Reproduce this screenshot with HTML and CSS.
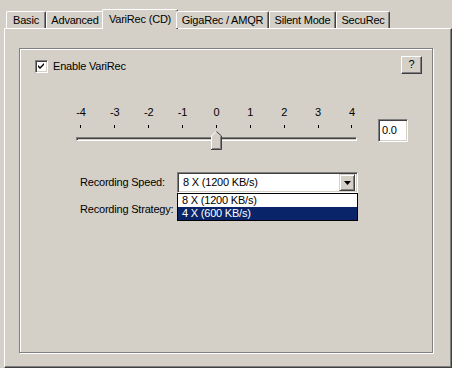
FILE: index.html
```html
<!DOCTYPE html>
<html>
<head>
<meta charset="utf-8">
<link rel="stylesheet" href="styles.css">
</head>
<body>
<div class="dialog">
  <div class="tabs">
    <div class="tab w-basic">Basic</div>
    <div class="tab w-adv">Advanced</div>
    <div class="tab active w-vari">VariRec (CD)</div>
    <div class="tab w-giga">GigaRec / AMQR</div>
    <div class="tab w-silent">Silent Mode</div>
    <div class="tab w-secu">SecuRec</div>
  </div>
  <div class="panel">
    <div class="group">
      <div class="header">
        <label class="check">
          <span class="box">
            <svg width="7" height="7" viewBox="0 0 7 7"><polygon points="0,2 2,4 6,0 6,2 2,6 0,4" fill="#000"/></svg>
          </span>
          <span>Enable VariRec</span>
        </label>
        <div class="btn help">?</div>
      </div>
      <div class="slider-row">
        <div class="slider">
          <div class="labels">
            <span>-4</span><span>-3</span><span>-2</span><span>-1</span><span>0</span><span>1</span><span>2</span><span>3</span><span>4</span>
          </div>
          <div class="ticks">
            <i></i><i></i><i></i><i></i><i></i><i></i><i></i><i></i><i></i>
          </div>
          <div class="track">
            <svg class="thumb" width="11" height="19" viewBox="0 0 11 19">
              <polygon points="0,5 5,0 10,5 10,18 0,18" fill="#d4d0c8"/>
              <polyline points="0.5,18 0.5,5 5,0.5" fill="none" stroke="#fff" stroke-width="1"/>
              <polyline points="5.5,0.5 10.5,5 10.5,18.5 0,18.5" fill="none" stroke="#404040" stroke-width="1"/>
              <polyline points="9.5,5.5 9.5,17.5 1,17.5" fill="none" stroke="#808080" stroke-width="1"/>
            </svg>
          </div>
        </div>
        <div class="edit">0.0</div>
      </div>
      <div class="field-row speed">
        <span class="field-label">Recording Speed:</span>
        <div class="combo">
          <span class="combo-text">8 X (1200 KB/s)</span>
          <span class="drop">
            <svg width="7" height="4" viewBox="0 0 7 4"><polygon points="0,0 7,0 3.5,4" fill="#000"/></svg>
          </span>
          <div class="list">
            <div class="item">8 X (1200 KB/s)</div>
            <div class="item sel">4 X (600 KB/s)</div>
          </div>
        </div>
      </div>
      <div class="field-row strategy">
        <span class="field-label">Recording Strategy:</span>
        <div class="combo under"></div>
      </div>
    </div>
  </div>
</div>
</body>
</html>
```
FILE: styles.css
```css
* { box-sizing: border-box; }
html, body {
  margin: 0;
  padding: 0;
  background: #d4d0c8;
}
body {
  width: 452px;
  height: 368px;
  overflow: hidden;
  font-family: "Liberation Sans", Arial, sans-serif;
  font-size: 11px;
  line-height: 13px;
  letter-spacing: -0.2px;
  color: #000;
}
.tabs {
  display: flex;
  align-items: flex-end;
  height: 19px;
  margin-top: 9px;
  padding-left: 6px;
  position: relative;
  z-index: 1;
}
.tab {
  height: 17px;
  padding-top: 2px;
  text-align: center;
  white-space: nowrap;
  border-top: 1px solid #fff;
  border-left: 1px solid #fff;
  border-right: 1px solid #404040;
  box-shadow: inset -1px 0 0 #808080;
  border-radius: 2px 2px 0 0;
  background: #d4d0c8;
}
.tab.active {
  height: 20px;
  margin: 0 -2px -1px -2px;
  padding-top: 3px;
}
.w-basic { width: 40px; }
.w-adv { width: 58px; }
.w-vari { width: 76px; }
.w-giga { width: 93px; }
.w-silent { width: 67px; }
.w-secu { width: 54px; }

.panel {
  margin-left: 4px;
  width: 448px;
  height: 340px;
  border-top: 1px solid #fff;
  border-left: 1px solid #fff;
  border-right: 1px solid #404040;
  border-bottom: 1px solid #404040;
  box-shadow: inset -1px -1px 0 #808080;
  padding-top: 19px;
  padding-left: 14px;
}
.group {
  width: 414px;
  height: 305px;
  border: 1px solid #808080;
  box-shadow: inset 1px 1px 0 #fff, 1px 1px 0 #fff;
}
.header {
  display: flex;
  justify-content: space-between;
  align-items: flex-start;
  padding: 7px 10px 0 15px;
}
.check {
  display: flex;
  align-items: center;
  gap: 5px;
  margin-top: 4px;
}
.box {
  width: 13px;
  height: 13px;
  background: #fff;
  border-top: 1px solid #808080;
  border-left: 1px solid #808080;
  border-right: 1px solid #fff;
  border-bottom: 1px solid #fff;
  box-shadow: inset 1px 1px 0 #404040, inset -1px -1px 0 #d4d0c8;
  display: flex;
  align-items: center;
  justify-content: center;
}
.btn {
  background: #d4d0c8;
  border-top: 1px solid #fff;
  border-left: 1px solid #fff;
  border-right: 1px solid #404040;
  border-bottom: 1px solid #404040;
  box-shadow: inset -1px -1px 0 #808080;
}
.help {
  width: 21px;
  height: 18px;
  text-align: center;
  line-height: 15px;
}
.slider-row {
  display: flex;
  align-items: flex-start;
  margin-top: 32px;
}
.slider {
  width: 349px;
}
.labels, .ticks {
  display: grid;
  grid-template-columns: repeat(9, 33.875px);
  margin-left: 44px;
}
.labels span {
  text-align: center;
}
.ticks {
  margin-top: 6px;
  height: 3px;
}
.ticks i {
  display: block;
  width: 1px;
  height: 3px;
  background: #000;
  justify-self: center;
}
.track {
  position: relative;
  margin-top: 9px;
  margin-left: 56px;
  width: 281px;
  height: 4px;
  border-top: 1px solid #808080;
  border-left: 1px solid #808080;
  border-right: 1px solid #fff;
  border-bottom: 1px solid #fff;
  box-shadow: inset 1px 1px 0 #404040;
}
.thumb {
  position: absolute;
  left: 134px;
  top: -7px;
  display: block;
}
.edit {
  margin-left: 9px;
  margin-top: 13px;
  width: 30px;
  height: 23px;
  background: #fff;
  border-top: 1px solid #808080;
  border-left: 1px solid #808080;
  border-right: 1px solid #fff;
  border-bottom: 1px solid #fff;
  box-shadow: inset 1px 1px 0 #404040, inset -1px -1px 0 #d4d0c8;
  padding: 4px 0 0 3px;
}
.field-row {
  display: flex;
  align-items: center;
  padding-left: 60px;
}
.speed { margin-top: 30px; }
.strategy { margin-top: 6px; }
.field-label {
  width: 97px;
  white-space: nowrap;
}
.combo {
  position: relative;
  width: 181px;
  height: 21px;
  background: #fff;
  border-top: 1px solid #808080;
  border-left: 1px solid #808080;
  border-right: 1px solid #fff;
  border-bottom: 1px solid #fff;
  box-shadow: inset 1px 1px 0 #404040, inset -1px -1px 0 #d4d0c8;
  display: flex;
  align-items: center;
  padding: 0 2px 0 5px;
}
.combo-text {
  flex: 1;
  white-space: nowrap;
}
.drop {
  width: 16px;
  height: 17px;
  background: #d4d0c8;
  border-top: 1px solid #d4d0c8;
  border-left: 1px solid #d4d0c8;
  border-right: 1px solid #404040;
  border-bottom: 1px solid #404040;
  box-shadow: inset 1px 1px 0 #fff, inset -1px -1px 0 #808080;
  display: flex;
  align-items: center;
  justify-content: center;
}
.list {
  position: absolute;
  left: -1px;
  top: 20px;
  width: 181px;
  height: 28px;
  background: #fff;
  border: 1px solid #000;
  z-index: 2;
}
.item {
  height: 13px;
  padding-left: 4px;
  white-space: nowrap;
}
.item.sel {
  background: #0a246a;
  color: #fff;
}
```
